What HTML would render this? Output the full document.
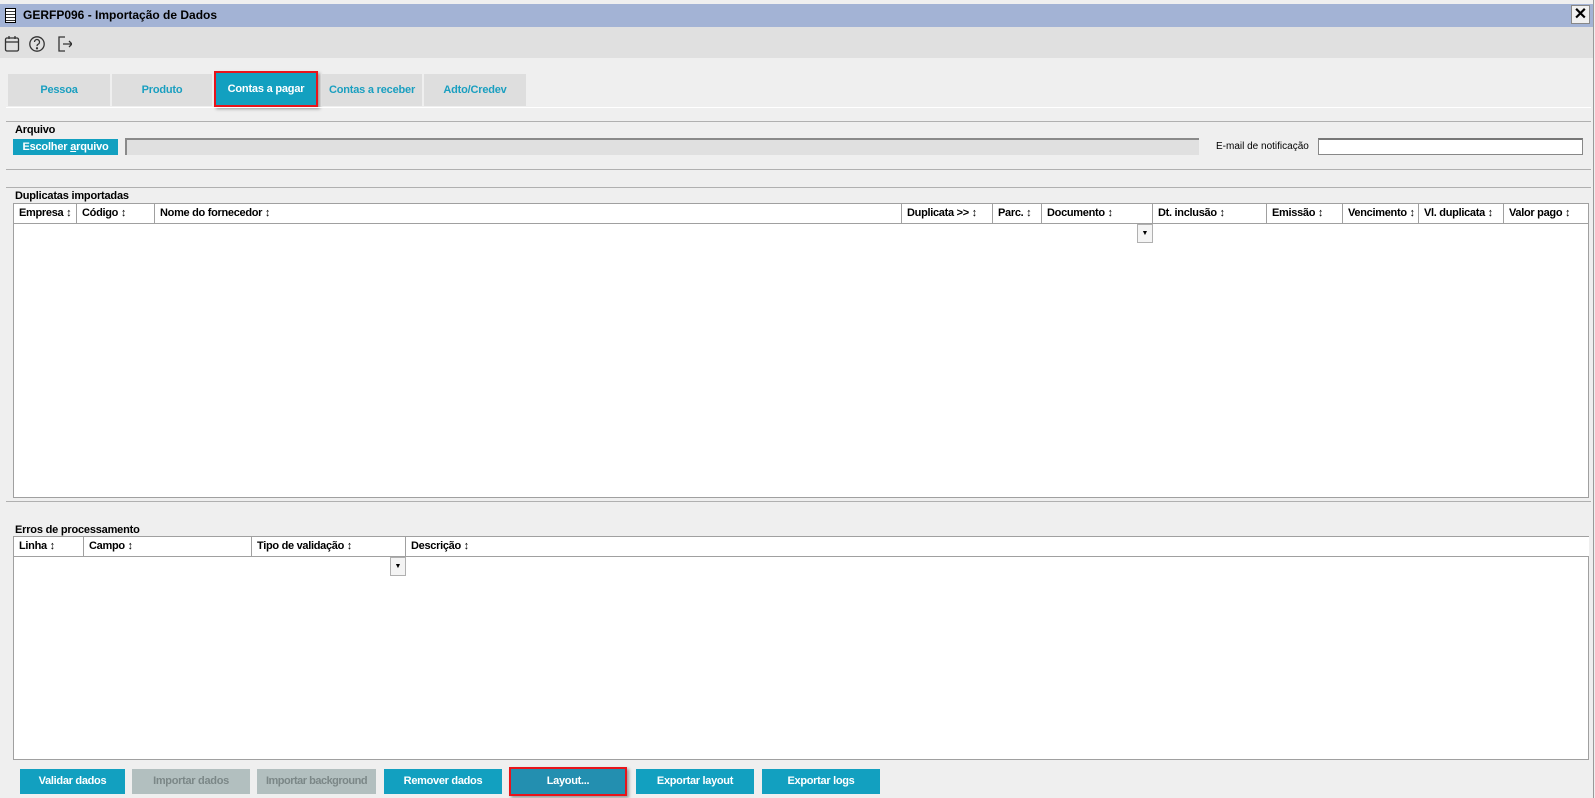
<!DOCTYPE html>
<html><head><meta charset="utf-8"><style>
*{margin:0;padding:0;box-sizing:border-box}
body{width:1595px;height:798px;background:#efefef;position:relative;overflow:hidden;font-family:"Liberation Sans",sans-serif;font-size:11px;color:#000;white-space:nowrap}
.a{position:absolute}
.title{left:0;top:4px;width:1593px;height:23px;background:#a3b3d5}
.tb{left:0;top:27px;width:1593px;height:31px;background:#e0e0e0}
.tab{position:absolute;top:74px;height:32px;background:#dedede;color:#1a9fc0;font-weight:bold;font-size:11px;letter-spacing:-0.2px;text-align:center;line-height:32px}
.hl{position:absolute;height:1px;background:#b0b0b0}
.btn{position:absolute;top:769px;height:25px;background:#12a0c0;color:#fff;font-weight:bold;font-size:11px;letter-spacing:-0.3px;text-align:center;line-height:25px;overflow:hidden}
.dis{background:#b2bfbf;color:#7b8787}
.tbl{position:absolute;background:#fff;border:1px solid #a0a0a0}
.th{position:absolute;top:0;height:20px;border-right:1px solid #a0a0a0;border-bottom:1px solid #a0a0a0;background:#fff;font-weight:bold;font-size:11px;letter-spacing:-0.3px;line-height:19px;padding-left:5px;overflow:hidden}
.dd{position:absolute;width:16px;height:19px;background:#f4f4f4;border:1px solid #b0b0b0;font-size:7px;text-align:center;line-height:17px}
.lbl{position:absolute;font-weight:bold;font-size:11px;letter-spacing:-0.2px}
</style></head><body>
<div class="a title"></div>
<div class="a" style="left:5px;top:8px;width:11px;height:15px;border:1px solid #000;background:repeating-linear-gradient(#fff 0 2px,#333 2px 3px)"></div>
<div class="a" style="left:23px;top:8px;font-weight:bold;font-size:12px">GERFP096 - Importação de Dados</div>
<div class="a" style="left:1571px;top:5px;width:19px;height:19px;background:#f0f0f0;border:1px solid #888;font-weight:bold;font-size:16px;text-align:center;line-height:17px">✕</div>
<div class="a" style="left:1593px;top:0;width:1px;height:798px;background:#9a9a9a"></div>
<div class="a tb"></div>
<svg class="a" style="left:4px;top:35px" width="68" height="18" viewBox="0 0 68 18" fill="none" stroke="#333" stroke-width="1.3">
<rect x="1.5" y="3" width="13" height="13" rx="1.5"/><line x1="1.5" y1="7" x2="14.5" y2="7"/><line x1="5" y1="1" x2="5" y2="4"/><line x1="11" y1="1" x2="11" y2="4"/>
<circle cx="33" cy="9" r="7.2"/><path d="M30.5 7a2.5 2.5 0 1 1 3.5 2.3c-.8.4-1 1-1 1.8"/><circle cx="33" cy="13.3" r=".5" fill="#333"/>
<path d="M61 2H55v14h6M59 9h9M65 6l3 3-3 3"/>
</svg>
<div class="tab" style="left:8px;width:102px">Pessoa</div>
<div class="tab" style="left:112px;width:100px">Produto</div>
<div class="tab" style="left:214px;width:104px;background:#12a0c0;color:#fff;border:2px solid #e8141b;top:71px;height:36px;line-height:32px;box-shadow:2px 2px 3px #999">Contas a pagar</div>
<div class="tab" style="left:322px;width:100px">Contas a receber</div>
<div class="tab" style="left:424px;width:102px">Adto/Credev</div>
<div class="hl" style="left:6px;top:107px;width:1585px;background:#fff"></div>
<div class="hl" style="left:6px;top:121px;width:1585px"></div>
<div class="lbl" style="left:15px;top:124px">Arquivo</div>
<div class="a" style="left:13px;top:139px;width:105px;height:16px;background:#12a0c0;color:#fff;font-weight:bold;letter-spacing:-0.2px;text-align:center;line-height:16px">Escolher <u>a</u>rquivo</div>
<div class="a" style="left:125px;top:138px;width:1074px;height:17px;background:#e0e0e0;border-top:2px solid #8a8a8a;border-left:2px solid #8a8a8a"></div>
<div class="a" style="left:1216px;top:141px;font-size:10px">E-mail de notificação</div>
<div class="a" style="left:1318px;top:138px;width:265px;height:17px;background:#fff;border:1px solid #888;border-top:2px solid #777"></div>
<div class="hl" style="left:6px;top:169px;width:1585px"></div>
<div class="hl" style="left:6px;top:187px;width:1585px"></div>
<div class="lbl" style="left:15px;top:190px">Duplicatas importadas</div>
<div class="tbl" style="left:13px;top:203px;width:1576px;height:295px">
<div class="th" style="left:0;width:63px">Empresa ↕</div>
<div class="th" style="left:63px;width:78px">Código ↕</div>
<div class="th" style="left:141px;width:747px">Nome do fornecedor ↕</div>
<div class="th" style="left:888px;width:91px">Duplicata &gt;&gt; ↕</div>
<div class="th" style="left:979px;width:49px">Parc. ↕</div>
<div class="th" style="left:1028px;width:111px">Documento ↕</div>
<div class="th" style="left:1139px;width:114px">Dt. inclusão ↕</div>
<div class="th" style="left:1253px;width:76px">Emissão ↕</div>
<div class="th" style="left:1329px;width:76px">Vencimento ↕</div>
<div class="th" style="left:1405px;width:85px">Vl. duplicata ↕</div>
<div class="th" style="left:1490px;width:85px">Valor pago ↕</div>
<div class="dd" style="left:1123px;top:20px">▼</div>
</div>
<div class="hl" style="left:6px;top:501px;width:1585px"></div>
<div class="lbl" style="left:15px;top:524px">Erros de processamento</div>
<div class="tbl" style="left:13px;top:536px;width:1576px;height:224px">
<div class="th" style="left:0;width:70px">Linha ↕</div>
<div class="th" style="left:70px;width:168px">Campo ↕</div>
<div class="th" style="left:238px;width:154px">Tipo de validação ↕</div>
<div class="th" style="left:392px;width:1183px;border-right:none">Descrição ↕</div>
<div class="dd" style="left:376px;top:20px">▼</div>
</div>
<div class="btn" style="left:20px;width:105px">Validar dados</div>
<div class="btn dis" style="left:132px;width:118px">Importar dados</div>
<div class="btn dis" style="left:257px;width:119px;letter-spacing:-0.5px">Importar background</div>
<div class="btn" style="left:384px;width:118px">Remover dados</div>
<div class="btn" style="left:509px;width:118px;background:#238fb0;border:2px solid #e8141b;top:767px;height:29px;line-height:25px;box-shadow:2px 2px 3px #999">Layout...</div>
<div class="btn" style="left:636px;width:118px">Exportar layout</div>
<div class="btn" style="left:762px;width:118px">Exportar logs</div>
</body></html>
